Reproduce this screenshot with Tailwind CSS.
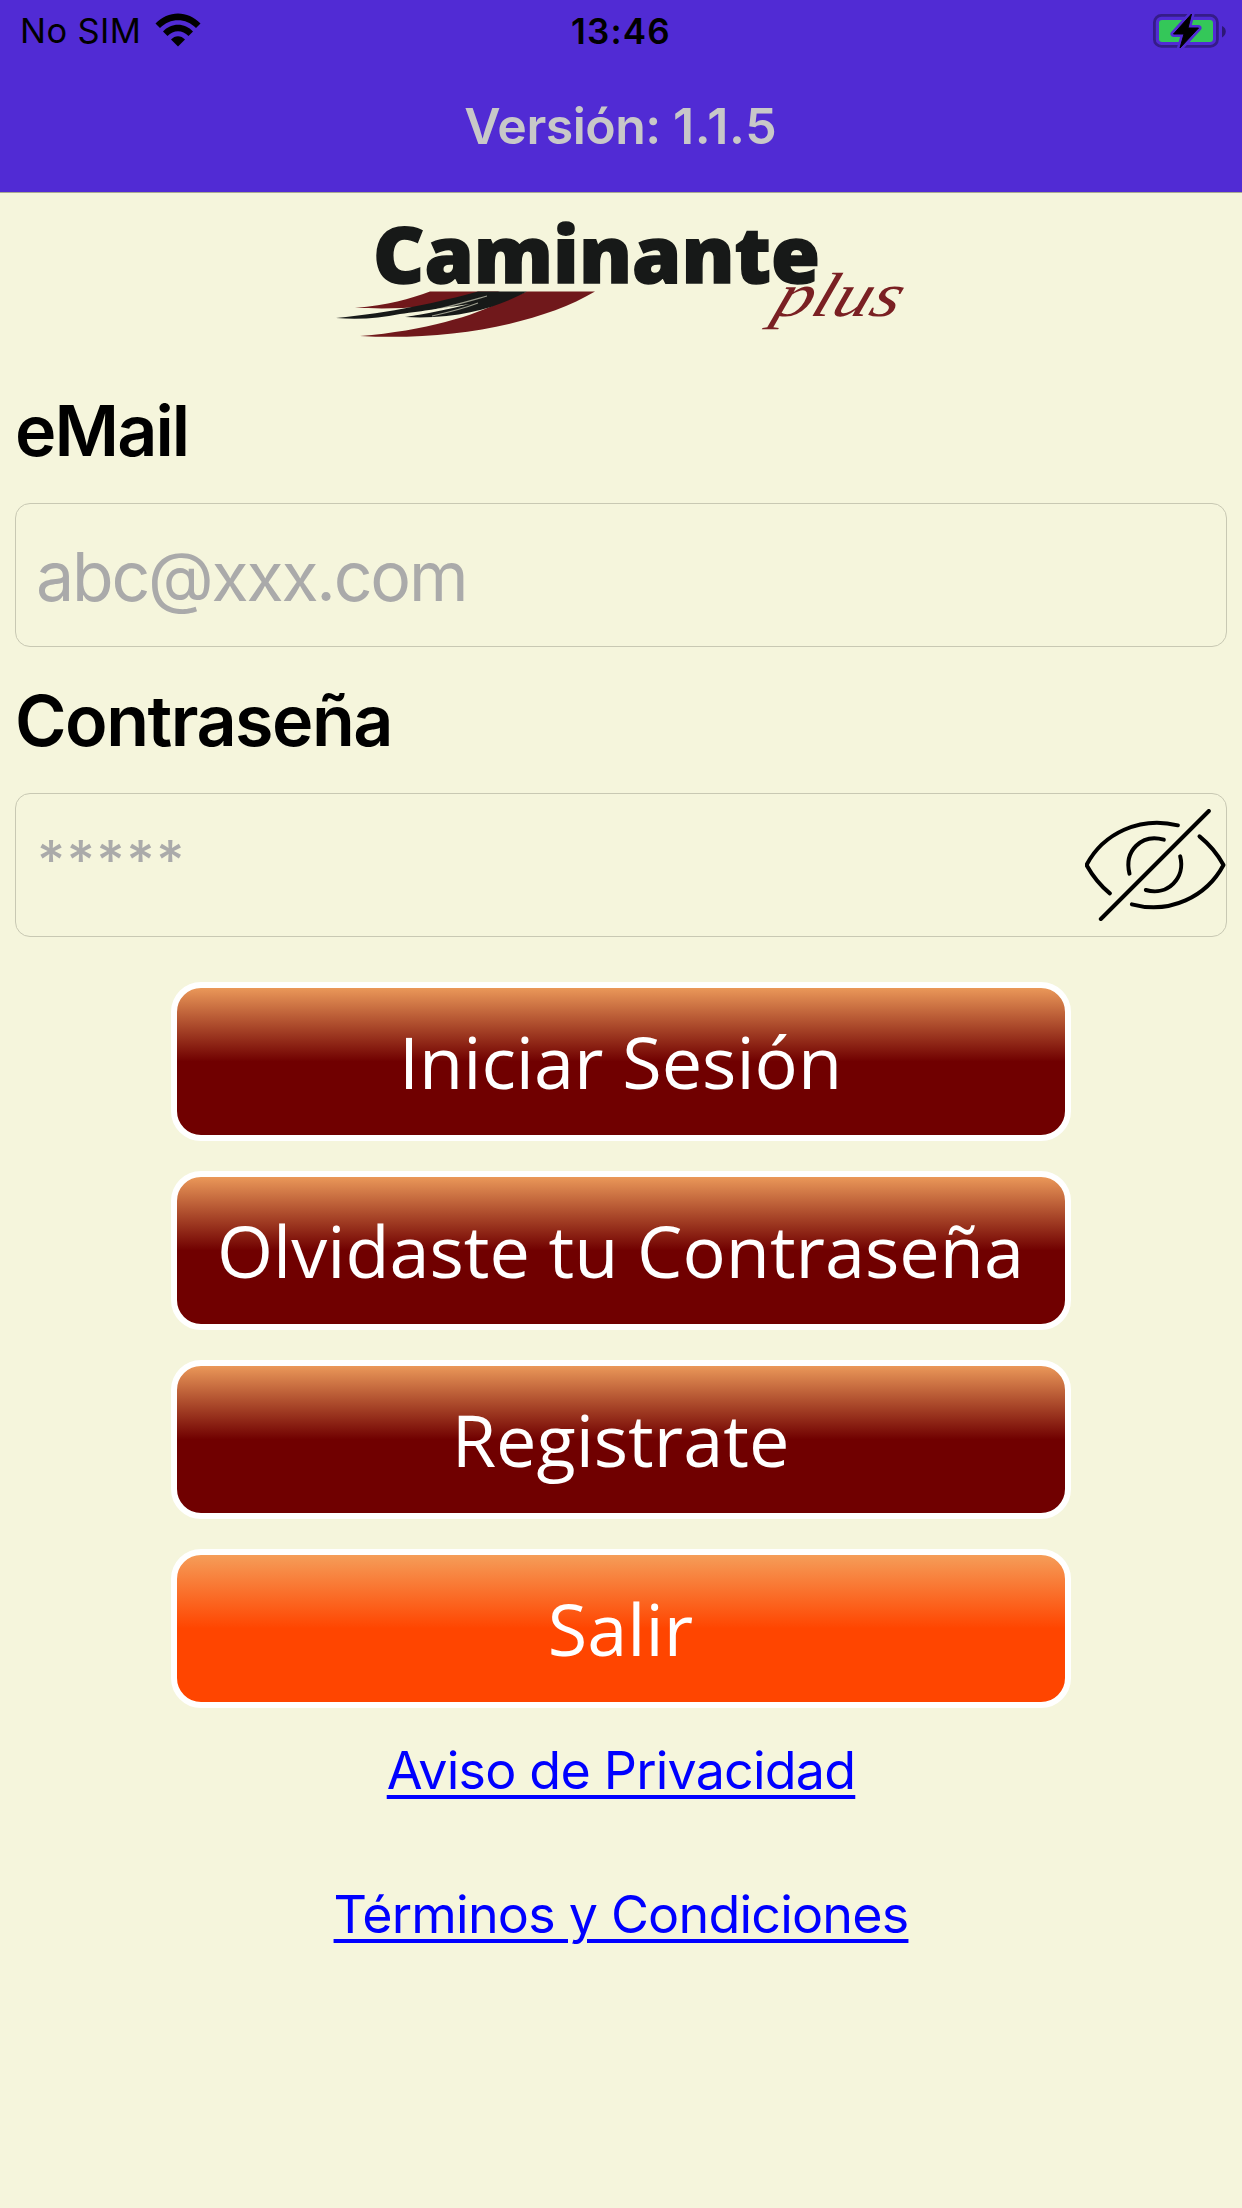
<!DOCTYPE html>
<html lang="es">
  <head>
    <meta charset="UTF-8" />
    <meta name="viewport" content="width=device-width, initial-scale=1.0" />
    <title>Caminante Plus</title>
    <script src="https://cdn.jsdelivr.net/npm/@tailwindcss/browser@4"></script>
  </head>
  <body class="bg-[#f5f5dc] min-h-screen flex flex-col font-['Inter',sans-serif] text-black">
    <header class="h-[193px] bg-[#512bd4] border-b border-[#a9a994]">
      <!-- Status bar -->
      <div class="h-[62px] px-[20px] grid grid-cols-3 items-center">
        <div class="flex items-center gap-[14px]">
          <span class="text-[34.5px] leading-none tracking-[0.4px]">No SIM</span>
          <svg class="w-[46px] h-[34px] -mt-[3px]" viewBox="0 0 46 34">
            <path d="M0.500 10.500C13-3 33-3 45.500 10.500L41 15C31 4.500 15 4.500 5 15Z" />
            <path d="M8 18.500C16 9.500 30 9.500 38 18.500L33.500 23C27.500 16.500 18.500 16.500 12.500 23Z" />
            <path d="M16 26.500C20 22 26 22 30 26.500L23 33.500Z" />
          </svg>
        </div>
        <span class="justify-self-center text-[35px] leading-none font-semibold tracking-[1.2px]">13:46</span>
        <svg class="justify-self-end w-[73px] h-[36px] -mr-[4px]" viewBox="0 0 73 36">
          <rect x="1.400" y="2.400" width="63" height="31" rx="7" fill="none" stroke="#351c89" stroke-width="2.800" />
          <path d="M69 13C74 15 74 22 69 24.500Z" fill="#2d1875" />
          <rect x="6" y="7" width="54" height="22" rx="3" fill="#34c759" />
          <path
            d="M38.500 1L20.500 21H31L27 35L45.500 15H35Z"
            stroke="#512bd4"
            stroke-width="6"
            stroke-linejoin="round"
          />
          <path d="M38.500 1L20.500 21H31L27 35L45.500 15H35Z" stroke="#000" stroke-width="1" stroke-linejoin="round" />
        </svg>
      </div>
      <h1 class="mt-[34px] text-center text-[50px] leading-[60px] font-semibold text-[#c8c8c8] tracking-[-0.500px]">
        Versión: <span class="tracking-[0.8px]">1.1.5</span>
      </h1>
    </header>

    <main class="flex flex-col px-[15px]">
      <svg class="self-center mt-[26px] w-[574px] h-[126px] overflow-visible" viewBox="334 219 574 126">
        <text
          x="373"
          y="283"
          textLength="447"
          lengthAdjust="spacingAndGlyphs"
          class="font-['Open_Sans',sans-serif] font-extrabold text-[78px]"
          fill="#171918"
          stroke="#171918"
          stroke-width="1.500"
        >Caminante</text>
        <!-- Road swoosh -->
        <path d="M355 308C388 305 410 299 430 291.500H500C465 300 440 304 425 306C400 309 380 308.500 355 308Z" fill="#70181b" />
        <path d="M360 336C425 331 476 315 500 302L527 291.500H595C540 324 450 341 360 336Z" fill="#70181b" />
        <path d="M336 318C390 313 440 302 478 291.500H527C500 306 460 320 405 317C425 314 450 309 470 304C440 308 425 311 400 314C380 318 360 320 336 318Z" fill="#171918" />
        <path d="M406 316C435 311 462 303 487 296M432 316C450 312 465 308 478 303" fill="none" stroke="#f5f5dc" stroke-width="1.200" opacity="0.600" />
        <text
          transform="translate(771 316) skewX(-20) scale(1 1.25)"
          textLength="125"
          lengthAdjust="spacingAndGlyphs"
          class="font-['Liberation_Serif',serif] italic text-[50px]"
          fill="#7a2023"
        >plus</text>
      </svg>

      <label for="email" class="mt-[44px] text-[70px] leading-[84px] font-semibold tracking-[-1.9px]">eMail</label>
      <input
        id="email"
        type="email"
        placeholder="abc@xxx.com"
        class="mt-[30px] h-[144px] px-[20px] pt-[1px] border border-[#c8c8b3] rounded-[15px] text-[68px] placeholder:text-[#aaaaaa] tracking-[-2.2px]"
      />

      <label for="password" class="mt-[32px] text-[70px] leading-[84px] font-semibold tracking-[-1.5px]">Contraseña</label>
      <div class="mt-[30px] h-[144px] flex items-center justify-between pl-[21px] border border-[#c8c8b3] rounded-[15px]">
        <input
          id="password"
          type="password"
          placeholder="*****"
          class="h-full w-[900px] pb-[12px] text-[54px] font-medium placeholder:text-[#aaaaaa] tracking-[1.7px]"
        />
        <svg
          class="w-[141px] h-[112px]"
          viewBox="106 117 422 336"
          fill="none"
          stroke="#000"
          stroke-width="12"
          stroke-linecap="round"
          stroke-linejoin="round"
        >
          <path d="M153 447L477 123" />
          <path d="M384 166C270 138 160 190 110 285C130 321 153 348 180 370" />
          <path d="M449 199C480 224 503 252 521 285C470 380 360 434 246 403" />
          <path d="M342 209C275 190 222 243 239 311" />
          <path d="M391 259C408 323 354 379 288 360" />
        </svg>
      </div>

      <div class="mt-[45px] self-center w-[900px] flex flex-col gap-[30px] font-['Open_Sans',sans-serif] text-[72px] leading-none text-white">
        <button class="h-[159px] pr-[1px] pb-[2px] border-[6px] border-white rounded-[30px] bg-origin-border bg-[linear-gradient(#f4a460,#700000_50%)]">
          Iniciar Sesión
        </button>
        <button class="h-[159px] pr-[1px] pb-[2px] border-[6px] border-white rounded-[30px] bg-origin-border bg-[linear-gradient(#f4a460,#700000_50%)]">
          Olvidaste tu Contraseña
        </button>
        <button class="h-[159px] pr-[1px] pb-[2px] border-[6px] border-white rounded-[30px] bg-origin-border bg-[linear-gradient(#f4a460,#700000_50%)]">
          Registrate
        </button>
        <button class="h-[159px] pr-[1px] pb-[2px] border-[6px] border-white rounded-[30px] bg-origin-border bg-[linear-gradient(#f4a460,#ff4500_50%)]">
          Salir
        </button>
      </div>

      <nav class="mt-[31px] flex flex-col items-center gap-[80px] text-[52px] leading-[64px] text-[#0000ff]">
        <a href="#" class="underline decoration-[4px] underline-offset-[6px] tracking-[-0.8px]">Aviso de Privacidad</a>
        <a href="#" class="underline decoration-[4px] underline-offset-[6px] tracking-[-0.8px]">Términos y Condiciones</a>
      </nav>
    </main>
  </body>
</html>
